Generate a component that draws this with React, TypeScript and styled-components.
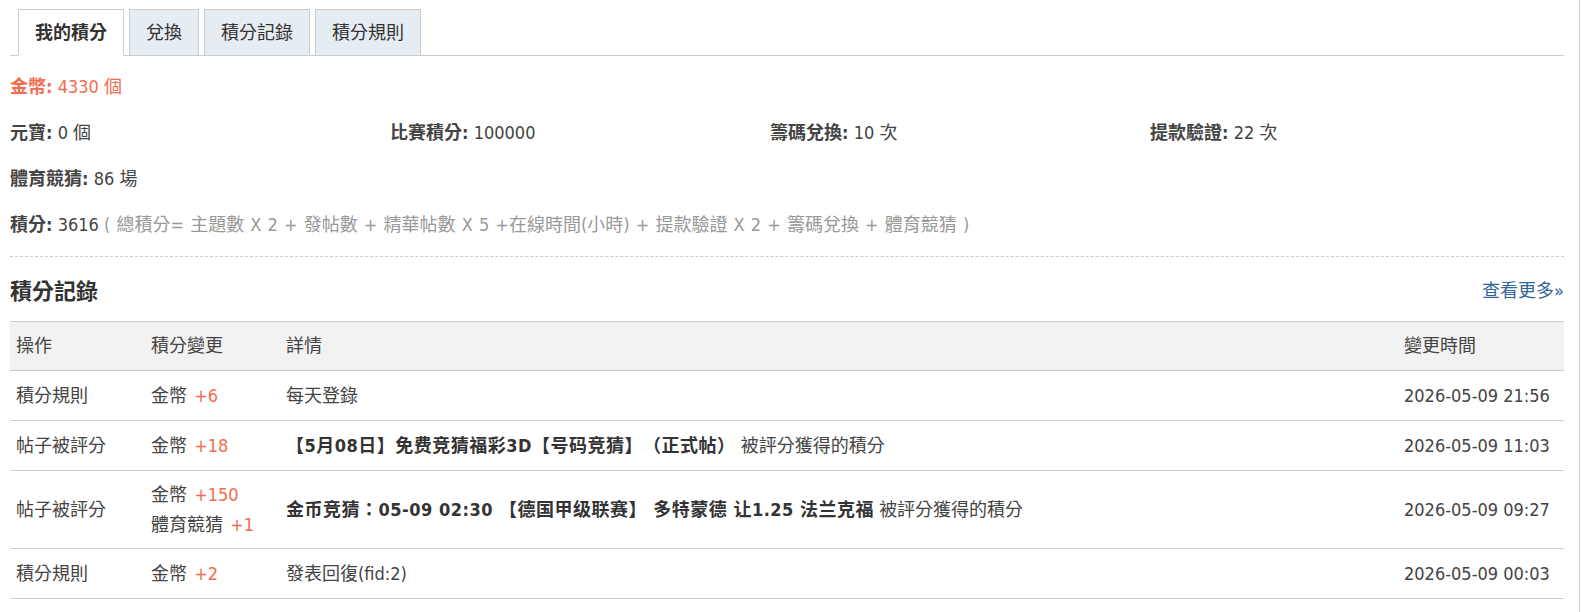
import React from "react"
import styled, { createGlobalStyle } from "styled-components"

type CreditChange = { name: string; amount: string }

type LogEntry = {
	action: string
	changes: CreditChange[]
	subject?: string
	detail: string
	time: string
}

const GlobalStyle = createGlobalStyle`
	html, body {
		margin: 0;
		padding: 0;
		background: #fff;
	}
	body {
		font-family: "DejaVu Sans Condensed", "Noto Sans CJK TC", sans-serif;
		font-stretch: condensed;
		font-size: 18px;
		color: #444;
		text-spacing-trim: space-all;
	}
`

const Page = styled.div`
	box-sizing: border-box;
	width: 1580px;
	min-height: 612px;
	padding: 9px 15px 0 10px;
	border-right: 1px solid #cdcdcd;
`

const TabBar = styled.ul`
	display: flex;
	align-items: flex-end;
	gap: 5px;
	height: 46px;
	margin: 0;
	padding: 0 0 0 8px;
	list-style: none;
	border-bottom: 1px solid #cdcdcd;
`

const Tab = styled.li<{ $active?: boolean }>`
	box-sizing: border-box;
	height: 47px;
	margin-bottom: -1px;
	padding: 0 16px;
	line-height: 45px;
	border: 1px solid #cdcdcd;
	border-bottom-color: ${(p) => (p.$active ? "#fff" : "#cdcdcd")};
	background: ${(p) => (p.$active ? "#fff" : "#e5edf2")};
	font-weight: ${(p) => (p.$active ? 700 : 400)};
	color: #333;
	cursor: pointer;
`

const Summary = styled.div`
	padding: 8px 0;
	border-bottom: 1px dashed #cdcdcd;
`

const InfoLine = styled.div<{ $coin?: boolean }>`
	padding: 10px 0;
	line-height: 26px;
	color: ${(p) => (p.$coin ? "#f26c4f" : "#444")};
`

const InfoGrid = styled.div`
	display: grid;
	grid-template-columns: repeat(4, 380px);
`

const Label = styled.strong`
	font-weight: 700;
`

const Muted = styled.span`
	color: #999;
	word-spacing: 1px;
`

const SectionHead = styled.div`
	display: flex;
	align-items: center;
	justify-content: space-between;
	height: 64px;
`

const Title = styled.h2`
	margin: 0;
	font-size: 22px;
	font-weight: 700;
	color: #333;
`

const MoreLink = styled.a`
	color: #369;
	text-decoration: none;
	cursor: pointer;
`

const columns = "135px 135px 1fr 166px"

const HeadRow = styled.div`
	display: grid;
	grid-template-columns: ${columns};
	align-items: center;
	min-height: 48px;
	line-height: 26px;
	background: #f2f2f2;
	border-top: 1px solid #cdcdcd;
	border-bottom: 1px solid #cdcdcd;
`

const Row = styled.div`
	display: grid;
	grid-template-columns: ${columns};
	align-items: center;
	min-height: 32px;
	padding: 9px 0 8px;
	line-height: 30px;
	border-bottom: 1px solid #cdcdcd;
`

const Cell = styled.div`
	padding: 0 6px;
`

const Amount = styled.span`
	margin-left: 2px;
	color: #f26c4f;
`

const Subject = styled.strong`
	font-weight: 700;
	letter-spacing: 0.5px;
	color: #333;
`

const tabs = ["我的積分", "兌換", "積分記錄", "積分規則"]

const stats = [
	{ label: "元寶", value: "0 個" },
	{ label: "比賽積分", value: "100000" },
	{ label: "籌碼兌換", value: "10 次" },
	{ label: "提款驗證", value: "22 次" },
	{ label: "體育競猜", value: "86 場" },
]

const logs: LogEntry[] = [
	{
		action: "積分規則",
		changes: [{ name: "金幣", amount: "+6" }],
		detail: "每天登錄",
		time: "2026-05-09 21:56",
	},
	{
		action: "帖子被評分",
		changes: [{ name: "金幣", amount: "+18" }],
		subject: "【5月08日】免费竞猜福彩3D【号码竞猜】（正式帖）",
		detail: "被評分獲得的積分",
		time: "2026-05-09 11:03",
	},
	{
		action: "帖子被評分",
		changes: [
			{ name: "金幣", amount: "+150" },
			{ name: "體育競猜", amount: "+1" },
		],
		subject: "金币竞猜：05-09 02:30 【德国甲级联赛】 多特蒙德 让1.25 法兰克福",
		detail: "被評分獲得的積分",
		time: "2026-05-09 09:27",
	},
	{
		action: "積分規則",
		changes: [{ name: "金幣", amount: "+2" }],
		detail: "發表回復(fid:2)",
		time: "2026-05-09 00:03",
	},
]

export default function App() {
	return (
		<>
			<GlobalStyle />
			<Page>
				<TabBar>
					{tabs.map((t, i) => (
						<Tab key={t} $active={i === 0}>
							{t}
						</Tab>
					))}
				</TabBar>

				<Summary>
					<InfoLine $coin>
						<Label>金幣:</Label> 4330 個
					</InfoLine>
					<InfoGrid>
						{stats.map((s) => (
							<InfoLine key={s.label}>
								<Label>{s.label}:</Label> {s.value}
							</InfoLine>
						))}
					</InfoGrid>
					<InfoLine>
						<Label>積分:</Label> 3616{" "}
						<Muted>
							( 總積分= 主題數 X 2 + 發帖數 + 精華帖數 X 5 +在線時間(小時) + 提款驗證 X 2 + 籌碼兌換 + 體育競猜 )
						</Muted>
					</InfoLine>
				</Summary>

				<SectionHead>
					<Title>積分記錄</Title>
					<MoreLink>查看更多»</MoreLink>
				</SectionHead>

				<HeadRow>
					<Cell>操作</Cell>
					<Cell>積分變更</Cell>
					<Cell>詳情</Cell>
					<Cell>變更時間</Cell>
				</HeadRow>
				{logs.map((log, i) => (
					<Row key={i}>
						<Cell>{log.action}</Cell>
						<Cell>
							{log.changes.map((c) => (
								<div key={c.name}>
									{c.name} <Amount>{c.amount}</Amount>
								</div>
							))}
						</Cell>
						<Cell>
							{log.subject && <Subject>{log.subject}</Subject>}
							{log.subject ? " " : ""}
							{log.detail}
						</Cell>
						<Cell>{log.time}</Cell>
					</Row>
				))}
			</Page>
		</>
	)
}
